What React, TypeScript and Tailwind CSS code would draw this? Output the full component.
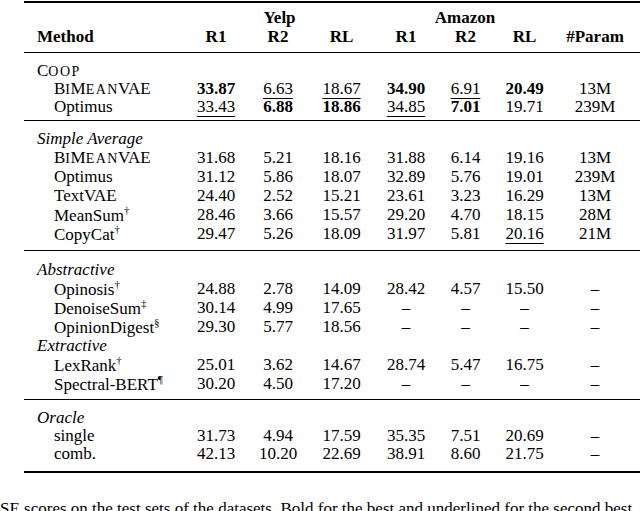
import React from "react";

type Line =
  | { kind: "label"; text: string; caps?: boolean }
  | { kind: "row"; name: string; mark?: string; caps?: boolean; cells: string[] };

type Group = { pt: string; pb: string; h: string; lines: Line[] };

// "*" = bold, "_" = underlined
const groups: Group[] = [
  {
    pt: "pt-[8px]",
    pb: "pb-[5px]",
    h: "h-[18px]",
    lines: [
      { kind: "label", text: "Coop", caps: true },
      { kind: "row", name: "BiMeanVAE", caps: true, cells: ["*33.87", "_6.63", "_18.67", "*34.90", "_6.91", "*20.49", "13M"] },
      { kind: "row", name: "Optimus", cells: ["_33.43", "*6.88", "*18.86", "_34.85", "*7.01", "19.71", "239M"] },
    ],
  },
  {
    pt: "pt-[8px]",
    pb: "pb-[7px]",
    h: "h-[19px]",
    lines: [
      { kind: "label", text: "Simple Average" },
      { kind: "row", name: "BiMeanVAE", caps: true, cells: ["31.68", "5.21", "18.16", "31.88", "6.14", "19.16", "13M"] },
      { kind: "row", name: "Optimus", cells: ["31.12", "5.86", "18.07", "32.89", "5.76", "19.01", "239M"] },
      { kind: "row", name: "TextVAE", cells: ["24.40", "2.52", "15.21", "23.61", "3.23", "16.29", "13M"] },
      { kind: "row", name: "MeanSum", mark: "†", cells: ["28.46", "3.66", "15.57", "29.20", "4.70", "18.15", "28M"] },
      { kind: "row", name: "CopyCat", mark: "†", cells: ["29.47", "5.26", "18.09", "31.97", "5.81", "_20.16", "21M"] },
    ],
  },
  {
    pt: "pt-[9px]",
    pb: "pb-[6px]",
    h: "h-[19px]",
    lines: [
      { kind: "label", text: "Abstractive" },
      { kind: "row", name: "Opinosis", mark: "†", cells: ["24.88", "2.78", "14.09", "28.42", "4.57", "15.50", "–"] },
      { kind: "row", name: "DenoiseSum", mark: "‡", cells: ["30.14", "4.99", "17.65", "–", "–", "–", "–"] },
      { kind: "row", name: "OpinionDigest", mark: "§", cells: ["29.30", "5.77", "18.56", "–", "–", "–", "–"] },
      { kind: "label", text: "Extractive" },
      { kind: "row", name: "LexRank", mark: "†", cells: ["25.01", "3.62", "14.67", "28.74", "5.47", "16.75", "–"] },
      { kind: "row", name: "Spectral-BERT", mark: "¶", cells: ["30.20", "4.50", "17.20", "–", "–", "–", "–"] },
    ],
  },
  {
    pt: "pt-[8px]",
    pb: "pb-[9px]",
    h: "h-[18px]",
    lines: [
      { kind: "label", text: "Oracle" },
      { kind: "row", name: "single", cells: ["31.73", "4.94", "17.59", "35.35", "7.51", "20.69", "–"] },
      { kind: "row", name: "comb.", cells: ["42.13", "10.20", "22.69", "38.91", "8.60", "21.75", "–"] },
    ],
  },
];

const colW = ["w-[56px]", "w-[68px]", "w-[59px]", "w-[70px]", "w-[49px]", "w-[69px]", "w-[72px]"];

// LaTeX-like small caps: capitals stay full size, lower case becomes smaller capitals
function SmallCaps({ text }: { text: string }) {
  const parts: { s: string; small: boolean }[] = [];
  for (const ch of text) {
    const small = ch !== ch.toUpperCase();
    const last = parts[parts.length - 1];
    if (last && last.small === small) last.s += ch;
    else parts.push({ s: ch, small });
  }
  return (
    <span>
      {parts.map((p, i) =>
        p.small ? (
          <span key={i} className="uppercase text-[14px] tracking-[1.5px] mr-[-1px]">
            {p.s}
          </span>
        ) : (
          <span key={i}>{p.s}</span>
        )
      )}
    </span>
  );
}

function Cell({ v, w }: { v: string; w: string }) {
  const bold = v.startsWith("*");
  const under = v.startsWith("_");
  const text = bold || under ? v.slice(1) : v;
  return (
    <div className={`${w} flex-none flex justify-center whitespace-nowrap`}>
      <span
        className={
          (bold ? "font-bold " : "") +
          (under ? "underline decoration-1 underline-offset-[4px]" : "")
        }
      >
        {text}
      </span>
    </div>
  );
}

function Rule({ thick }: { thick?: boolean }) {
  return <div className={thick ? "h-[2px] bg-black" : "h-px bg-black"} />;
}

export default function App() {
  return (
    <div
      className="w-[640px] h-[511px] overflow-hidden bg-white text-black text-[17px] leading-[19px]"
      style={{ fontFamily: '"Liberation Serif", "Times New Roman", serif' }}
    >
      <div className="ml-[24px] w-[624px]">
        <div className="mt-[1px]">
          <Rule thick />
        </div>

        {/* header */}
        <div className="pt-[5px] pb-[6px] font-bold">
          <div className="flex h-[19px]">
            <div className="w-[164px] flex-none" />
            <div className="w-[183px] flex-none flex justify-center">Yelp</div>
            <div className="w-[188px] flex-none flex justify-center">Amazon</div>
          </div>
          <div className="flex h-[19px]">
            <div className="w-[164px] flex-none pl-[13px]">Method</div>
            {["R1", "R2", "RL", "R1", "R2", "RL", "#Param"].map((h, i) => (
              <Cell key={i} v={h} w={colW[i]} />
            ))}
          </div>
        </div>

        {groups.map((g, gi) => (
          <div key={gi}>
            <Rule thick={false} />
            <div className={`${g.pt} ${g.pb}`}>
              {g.lines.map((l, li) =>
                l.kind === "label" ? (
                  <div key={li} className={`${g.h} pl-[13px] whitespace-nowrap`}>
                    {l.caps ? <SmallCaps text={l.text} /> : <span className="italic">{l.text}</span>}
                  </div>
                ) : (
                  <div key={li} className={`flex ${g.h}`}>
                    <div className="w-[164px] flex-none pl-[30px] whitespace-nowrap">
                      {l.caps ? <SmallCaps text={l.name} /> : <span>{l.name}</span>}
                      {l.mark && <span className="align-super text-[11px] leading-none">{l.mark}</span>}
                    </div>
                    {l.cells.map((c, ci) => (
                      <Cell key={ci} v={c} w={colW[ci]} />
                    ))}
                  </div>
                )
              )}
            </div>
          </div>
        ))}
        <Rule thick />
      </div>

      <div className="mt-[26px] whitespace-nowrap">
        SE scores on the test sets of the datasets. Bold for the best and underlined for the second best.
      </div>
    </div>
  );
}
